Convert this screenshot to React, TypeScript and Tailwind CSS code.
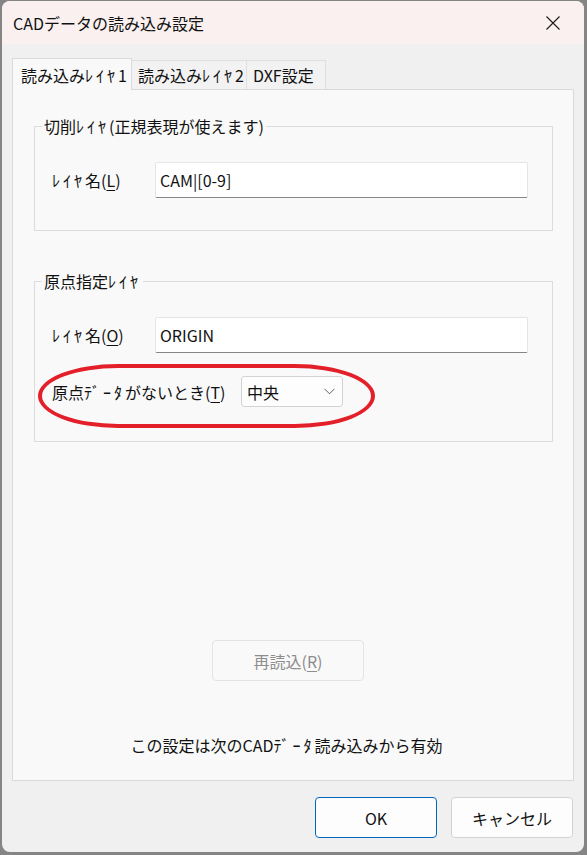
import { ReactNode } from 'react';

function Mn({ children }: { children: ReactNode }) {
  return <span className="underline underline-offset-[3px] decoration-1">{children}</span>;
}

// half-width katakana are wider in the original UI font
function Hw({ children }: { children: ReactNode }) {
  return <span className="tracking-[3px]">{children}</span>;
}

function TextBox({ value }: { value: string }) {
  return (
    <div className="w-[373px] h-[36px] bg-white border border-[#e5e5e5] border-b-[#868686] rounded-[2px] flex items-center pl-[4px] text-[16px] text-[#111]">
      {value}
    </div>
  );
}

function Tab({ children, active, w }: { children: ReactNode; active?: boolean; w: string }) {
  return active ? (
    <div className={`relative z-10 -mb-px h-[32px] bg-[#f9f9f9] border border-b-0 border-[#dadada] flex items-center pl-[8px] ${w}`}>
      {children}
    </div>
  ) : (
    <div className={`h-[29px] bg-[#f2f2f2] border border-l-0 border-b-0 border-[#dfdfdf] flex items-center pl-[6px] ${w}`}>
      {children}
    </div>
  );
}

export default function App() {
  return (
    <div className="w-[587px] h-[855px] bg-[#858585] pl-[2px] pt-[1px] pr-[3px] pb-[3px] font-['Noto_Sans_CJK_JP',sans-serif] text-[16px] text-[#111]">
      <div className="h-full flex flex-col rounded-[8px] overflow-hidden bg-[#f0f0f0]">
        {/* title bar */}
        <div className="h-[43px] shrink-0 bg-[#f9f0ef] flex items-center justify-between pl-[11px] pr-[24px]">
          <span className="text-[16px]">CADデータの読み込み設定</span>
          <svg width="14" height="14" viewBox="0 0 14 14" className="text-[#1a1a1a]">
            <path d="M0.5 0.5 L13.5 13.5 M13.5 0.5 L0.5 13.5" stroke="currentColor" strokeWidth="1.1" fill="none" />
          </svg>
        </div>

        <div className="flex-1 flex flex-col px-[10px] pt-[14px] pb-[14px]">
          {/* tabs */}
          <div className="h-[31px] flex items-end">
            <Tab active w="w-[120px]">読み込み<Hw>ﾚｲﾔ</Hw>1</Tab>
            <Tab w="w-[115px]">読み込み<Hw>ﾚｲﾔ</Hw>2</Tab>
            <Tab w="w-[79px]">DXF設定</Tab>
          </div>

          {/* tab panel */}
          <div className="flex-1 flex flex-col bg-[#f9f9f9] border border-[#dadada] pt-[25px] pl-[21px] pr-[20px]">
            <fieldset className="border border-[#dcdcdc] pl-[17px] pb-[32px]">
              <legend className="-ml-[10px] px-[2px] leading-[22px]">切削<Hw>ﾚｲﾔ</Hw>(正規表現が使えます)</legend>
              <div className="flex items-center pt-[25px]">
                <span className="w-[103px]"><Hw>ﾚｲﾔ</Hw>名(<Mn>L</Mn>)</span>
                <TextBox value="CAM|[0-9]" />
              </div>
            </fieldset>

            <fieldset className="mt-[39px] border border-[#dcdcdc] pl-[17px] pb-[34px]">
              <legend className="-ml-[10px] px-[2px] leading-[22px]">原点指定<Hw>ﾚｲﾔ</Hw></legend>
              <div className="flex items-center pt-[25px]">
                <span className="w-[103px]"><Hw>ﾚｲﾔ</Hw>名(<Mn>O</Mn>)</span>
                <TextBox value="ORIGIN" />
              </div>
              <div className="relative mt-[23px] flex items-center h-[31px]">
                <span className="w-[189px]">原点<Hw>ﾃﾞｰﾀ</Hw>がないとき(<Mn>T</Mn>)</span>
                <div className="w-[102px] h-[31px] bg-[#fdfdfd] border border-[#d3d3d3] rounded-[3px] flex items-center justify-between pl-[5px] pr-[7px] text-[16px]">
                  <span>中央</span>
                  <svg width="11" height="7" viewBox="0 0 11 7">
                    <path d="M0.5 0.8 L5.5 5.8 L10.5 0.8" stroke="#606060" strokeWidth="1" fill="none" />
                  </svg>
                </div>
                <div className="absolute -left-[14px] -top-[12px] w-[337px] h-[64px] border-[4px] border-[#e3202a] rounded-[80px/32px] pointer-events-none" />
              </div>
            </fieldset>

            <button
              disabled
              className="self-start ml-[178px] mt-[198px] w-[152px] h-[41px] border border-[#e3e3e3] rounded-[4px] bg-[#f9f9f9] text-[#8d8d8d] text-[16px]"
            >
              再読込(<Mn>R</Mn>)
            </button>

            <div className="mt-[53px] leading-[22px] text-center pr-[14px]">
              この設定は次のCAD<Hw>ﾃﾞｰﾀ</Hw>読み込みから有効
            </div>
          </div>

          {/* dialog buttons */}
          <div className="mt-[16px] flex justify-end gap-[14px] pr-[1px]">
            <button className="w-[122px] h-[41px] bg-[#fdfdfd] border border-[#0067c0] rounded-[4px] text-[16px]">OK</button>
            <button className="w-[122px] h-[41px] bg-[#fdfdfd] border border-[#d3d3d3] rounded-[4px] text-[16px]">キャンセル</button>
          </div>
        </div>
      </div>
    </div>
  );
}
